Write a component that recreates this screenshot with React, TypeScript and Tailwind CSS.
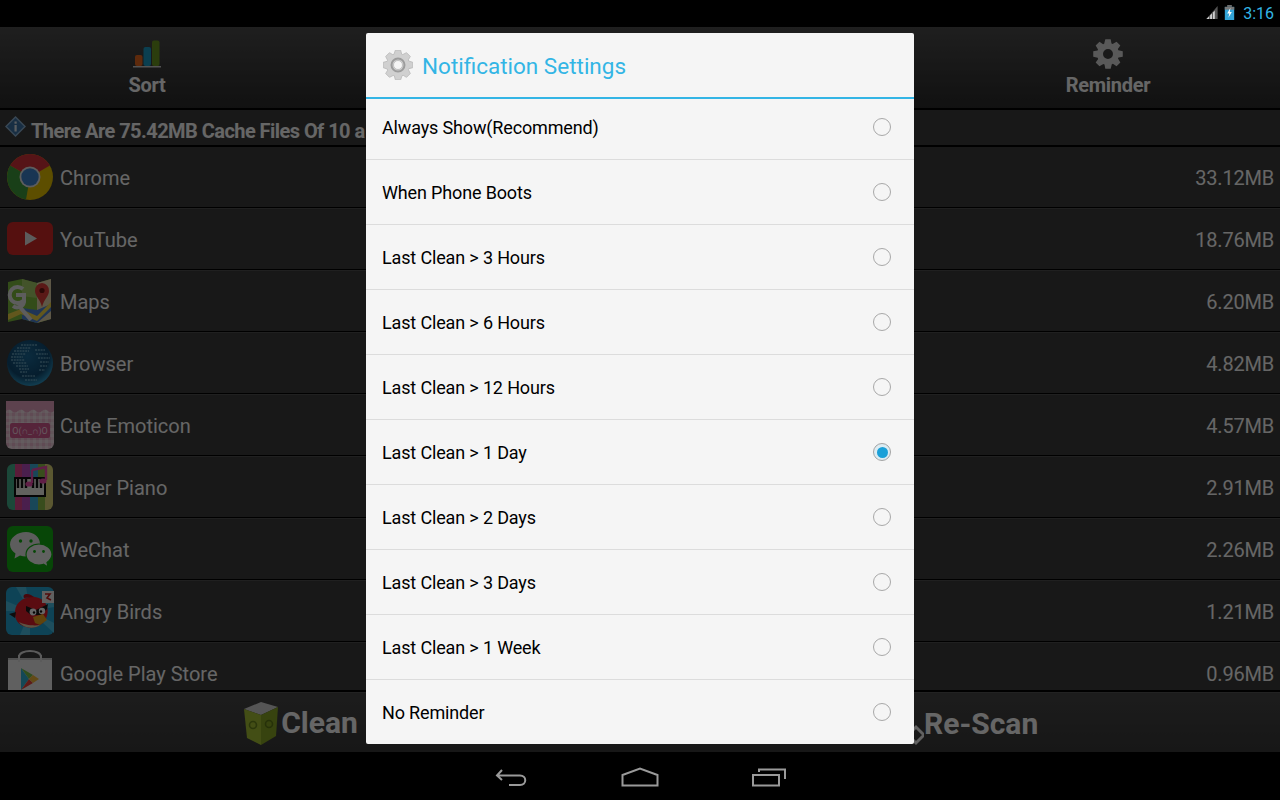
import React from 'react';

const gearPath = (cx: number, cy: number, outer: number, inner: number, teeth: number) => {
  const pts: string[] = [];
  const step = (Math.PI * 2) / teeth;
  for (let i = 0; i < teeth; i++) {
    const a = i * step - Math.PI / 2;
    const offs: [number, number][] = [
      [-0.5, inner],
      [-0.28, outer],
      [0.18, outer],
      [0.36, inner],
    ];
    offs.forEach(([o, r]) => {
      const t = a + o * step + step * 0.05;
      pts.push(`${(cx + Math.cos(t) * r).toFixed(2)} ${(cy + Math.sin(t) * r).toFixed(2)}`);
    });
  }
  return `M${pts.join('L')}Z`;
};

const ChromeIcon = () => (
  <svg width="46" height="46" viewBox="0 0 46 46">
    <circle cx="23" cy="23" r="23" fill="#e8c200" />
    <path d="M23 23L3.1 11.5A23 23 0 0 1 42.9 11.5Z" fill="#d8333a" />
    <path d="M23 23L3.1 11.5A23 23 0 0 0 19 45.6Z" fill="#3f9e3c" />
    <circle cx="23" cy="23" r="10.5" fill="#e8e8e8" />
    <circle cx="23" cy="23" r="8.7" fill="#3f86cf" />
  </svg>
);

const YouTubeIcon = () => (
  <svg width="46" height="34" viewBox="0 0 46 34">
    <rect width="46" height="33" rx="6" fill="#d42a26" />
    <path d="M18 9.5L30 16.5L18 23.5Z" fill="#e6e6e6" />
  </svg>
);

const MapsIcon = () => (
  <svg width="46" height="46" viewBox="0 0 46 46">
    <path d="M1 4L15 1L30 5L44 1V41L30 45L15 41L1 44Z" fill="#7fbf3f" />
    <path d="M30 5L44 1V41L30 45Z" fill="#e8d9b0" />
    <path d="M15 1L30 5V20L15 18Z" fill="#a8cf6a" />
    <path d="M15 30L30 32L44 26V33L30 45L15 41Z" fill="#4f86d8" />
    <path d="M1 36L14 31L30 38L44 24V29L30 43L14 36L1 42Z" fill="#f4d94a" />
    <path d="M16 11A8 8 0 1 0 16 23M9 17H17V24A7 7 0 0 1 6 28" fill="none" stroke="#e8e8e8" strokeWidth="4" />
    <path d="M12 28L24 42" stroke="#e8e8e8" strokeWidth="4" />
    <path d="M35 5A7.5 7.5 0 0 1 42 13C42 18 37 21 35 29C33 21 28 18 28 13A7.5 7.5 0 0 1 35 5Z" fill="#e0403a" />
    <circle cx="35" cy="12.5" r="2.6" fill="#6b1512" />
  </svg>
);

const BrowserIcon = () => (
  <svg width="46" height="46" viewBox="0 0 46 46">
    <defs>
      <radialGradient id="globe" cx="45%" cy="35%" r="70%">
        <stop offset="0%" stopColor="#1c6c9c" />
        <stop offset="65%" stopColor="#104a72" />
        <stop offset="100%" stopColor="#35aede" />
      </radialGradient>
    </defs>
    <circle cx="23" cy="23" r="23" fill="url(#globe)" />
    <g stroke="#9cd2e6" strokeWidth="0.9" strokeDasharray="2 0.8">
      <path d="M14 5H30M10 8H24M7 11H22M5 14H19M4 17H16M4 20H18M6 23H20M9 26H21M12 29H22M13 32H20M15 36H28M18 40H30" />
      <path d="M28 10H38M29 14H41M31 18H43M33 22H42M33 26H40M32 30H38" />
    </g>
  </svg>
);

const EmoticonIcon = () => (
  <svg width="48" height="48" viewBox="0 0 48 48">
    <defs>
      <pattern id="check" width="6" height="6" patternUnits="userSpaceOnUse">
        <rect width="6" height="6" fill="#f6d4e2" />
        <rect width="3" height="3" fill="#efbcd2" />
        <rect x="3" y="3" width="3" height="3" fill="#fbe6ee" />
      </pattern>
    </defs>
    <rect width="48" height="48" rx="6" fill="url(#check)" />
    <path d="M0 0H48V10Q45 13 42 10T36 10T30 10T24 10T18 10T12 10T6 10T0 10Z" fill="#e8a6c4" />
    <rect x="4" y="22" width="40" height="15" rx="2" fill="#d75a92" />
    <text x="24" y="33" textAnchor="middle" fontSize="9" fill="#fbdbe8" fontFamily="Roboto, sans-serif">O(∩_∩)O</text>
  </svg>
);

const PianoIcon = () => (
  <svg width="46" height="46" viewBox="0 0 46 46">
    <defs>
      <clipPath id="pianoClip">
        <rect width="46" height="46" rx="6" />
      </clipPath>
    </defs>
    <g clipPath="url(#pianoClip)">
      <rect x="0" width="8" height="46" fill="#45b58f" />
      <rect x="8" width="8" height="46" fill="#e0488f" />
      <rect x="15" width="8" height="46" fill="#b84fc0" />
      <rect x="23" width="8" height="46" fill="#3fb2dd" />
      <rect x="31" width="7" height="46" fill="#8fc04a" />
      <rect x="38" width="8" height="46" fill="#e3dd7a" />
    </g>
    <rect x="8" y="14" width="30" height="18" fill="#f2f2ea" stroke="#111" strokeWidth="2" />
    <path d="M11 14V24M15 14V24M19 14V24M26 14V24M30 14V24M34 14V24" stroke="#111" strokeWidth="2.4" />
    <path d="M25 6L39 3V16M25 6V19" fill="none" stroke="#f04bb0" strokeWidth="2.4" />
    <ellipse cx="22" cy="20" rx="3.6" ry="2.6" fill="#f04bb0" />
    <ellipse cx="36" cy="17" rx="3.6" ry="2.6" fill="#f04bb0" />
  </svg>
);

const WeChatIcon = () => (
  <svg width="46" height="46" viewBox="0 0 46 46">
    <rect width="46" height="46" rx="6" fill="#13b013" />
    <path d="M19 6C10.5 6 3 11.5 3 18.5C3 22.5 5.5 25.5 8.5 27.5L7.5 32.5L13 29.5C15 30 17 30.5 19 30.5C25 30.5 33 25 33 18C33 11 27 6 19 6Z" fill="#e8e8e8" />
    <circle cx="13.5" cy="15" r="1.7" fill="#13b013" />
    <circle cx="24" cy="15" r="1.7" fill="#13b013" />
    <path d="M32 18C25 18 19 22.5 19 28.5C19 34.5 25 39 32 39C33.5 39 35 38.8 36.5 38.2L41 41L40 36.5C42.5 34.5 45 32 45 28.5C45 22.5 39 18 32 18Z" fill="#f2f2f2" stroke="#13b013" strokeWidth="1.2" />
    <circle cx="27.5" cy="25.5" r="1.4" fill="#13b013" />
    <circle cx="36.5" cy="25.5" r="1.4" fill="#13b013" />
  </svg>
);

const BirdsIcon = () => (
  <svg width="48" height="48" viewBox="0 0 48 48">
    <rect width="48" height="48" rx="6" fill="#25a9d8" />
    <path d="M24 24L10 0H20ZM24 24L48 10V20ZM24 24L0 14V24ZM24 24L14 48H24ZM24 24L48 36V46Z" fill="#4cc4e8" />
    <path d="M9 24C10 14 20 9 29 10C38 11 44 19 41 29C38 39 28 42 20 40C12 38 8 32 9 24Z" fill="#e01e2c" />
    <path d="M18 11C16 7 21 6 25 8L28 10Z" fill="#b5121f" />
    <path d="M13 35C18 42 29 42 34 38C28 39 18 38 13 35Z" fill="#e8d3a8" />
    <path d="M3 27L10 25L9 31Z" fill="#222" />
    <path d="M20 19L30 23L42 17L41 22L35 28H25L20 24Z" fill="#1a1a1a" />
    <circle cx="27" cy="25" r="3.4" fill="#fff" />
    <circle cx="36" cy="24" r="3.2" fill="#fff" />
    <circle cx="28" cy="25.5" r="1.2" fill="#111" />
    <circle cx="35" cy="24.5" r="1.2" fill="#111" />
    <path d="M27 30L37 27L41 33L34 38L29 36Z" fill="#f0a81e" />
    <rect x="36" y="4" width="12" height="12" fill="#f0f0f0" />
    <path d="M39 7H44L41 11L45 13" fill="none" stroke="#c81e1e" strokeWidth="1.6" />
  </svg>
);

const PlayStoreIcon = () => (
  <svg width="46" height="46" viewBox="0 0 46 46">
    <path d="M12 12V7C12 -1 34 -1 34 7V12" fill="none" stroke="#e4e4e4" strokeWidth="2" />
    <path d="M1 8H45V46H1Z" fill="#f1f1f1" />
    <path d="M1 8H45V10H1Z" fill="#c8c8c8" />
    <path d="M12 5V12M34 5V12" stroke="#e4e4e4" strokeWidth="2" />
    <path d="M14 18L22 29L14 40Z" fill="#34b4d8" />
    <path d="M14 18L26 25L22 29Z" fill="#7cc24a" />
    <path d="M14 40L26 33L22 29Z" fill="#e8453c" />
    <path d="M26 25L32 29L26 33L22 29Z" fill="#f6b93a" />
  </svg>
);

const apps: { name: string; size: string; icon: React.ReactNode }[] = [
  { name: 'Chrome', size: '33.12MB', icon: <ChromeIcon /> },
  { name: 'YouTube', size: '18.76MB', icon: <YouTubeIcon /> },
  { name: 'Maps', size: '6.20MB', icon: <MapsIcon /> },
  { name: 'Browser', size: '4.82MB', icon: <BrowserIcon /> },
  { name: 'Cute Emoticon', size: '4.57MB', icon: <EmoticonIcon /> },
  { name: 'Super Piano', size: '2.91MB', icon: <PianoIcon /> },
  { name: 'WeChat', size: '2.26MB', icon: <WeChatIcon /> },
  { name: 'Angry Birds', size: '1.21MB', icon: <BirdsIcon /> },
  { name: 'Google Play Store', size: '0.96MB', icon: <PlayStoreIcon /> },
];

const options = [
  'Always Show(Recommend)',
  'When Phone Boots',
  'Last Clean > 3 Hours',
  'Last Clean > 6 Hours',
  'Last Clean > 12 Hours',
  'Last Clean > 1 Day',
  'Last Clean > 2 Days',
  'Last Clean > 3 Days',
  'Last Clean > 1 Week',
  'No Reminder',
];

const Radio = ({ checked }: { checked: boolean }) =>
  checked ? (
    <div className="w-[18px] h-[18px] rounded-full border-[1.5px] border-[#a4a4a4] bg-[#dcecf3] flex items-center justify-center">
      <div className="w-[11px] h-[11px] rounded-full bg-[#1aa0d8]"></div>
    </div>
  ) : (
    <div className="w-[18px] h-[18px] rounded-full border-[1.5px] border-[#a8a8a8]"></div>
  );

const StatusBar = () => (
  <div className="h-[27px] bg-black flex items-start justify-end pt-[5px] pr-[6px]">
    <svg width="14" height="15" viewBox="0 0 14 16">
      <path d="M13 1V15H1Z" fill="#555" />
      <path d="M1 15L4 12V15ZM5 11L7 9V15H5ZM8 8L10 6V15H8Z" fill="#cfcfcf" />
    </svg>
    <svg width="11" height="15" viewBox="0 0 11 16" className="ml-[5px]">
      <rect x="3" y="0" width="5" height="2" fill="#6c6c6c" />
      <rect x="0.5" y="2" width="10" height="14" fill="#33a5d8" />
      <rect x="0.5" y="2" width="10" height="3" fill="#777" />
      <path d="M6.5 3L3 9H5.3L4.3 13.5L8 7.5H5.8Z" fill="#fff" />
    </svg>
    <span className="ml-[8px] text-[16px] leading-[18px] text-[#33b5e5]">3:16</span>
  </div>
);

const NavBar = () => (
  <div className="h-[48px] bg-black flex items-start justify-center pt-[15px] relative">
    <svg width="36" height="20" viewBox="0 0 36 20">
      <path d="M8 3L3 8.5L8 13M3 8.5H26C33 8.5 33 18 26 18H15" fill="none" stroke="#9a9a9a" strokeWidth="2" />
    </svg>
    <svg width="38" height="20" viewBox="0 0 38 20" className="ml-[91px]">
      <path d="M1.5 18.5V8L19 1.5L36.5 8V18.5Z" fill="none" stroke="#9a9a9a" strokeWidth="2" />
    </svg>
    <svg width="36" height="20" viewBox="0 0 36 20" className="ml-[92px]">
      <path d="M8 5V2.5H34V12" fill="none" stroke="#9a9a9a" strokeWidth="2" />
      <rect x="2" y="8" width="26" height="10.5" fill="none" stroke="#9a9a9a" strokeWidth="2" />
    </svg>
  </div>
);

const Toolbar = () => (
  <div className="h-[83px] flex border-b-2 border-black bg-gradient-to-b from-[#4e4e4e] to-[#2c2c2c]">
    <div className="w-[294px] flex flex-col items-center pt-[13px]">
      <svg width="28" height="28" viewBox="0 0 28 28">
        <rect x="2" y="15" width="7.5" height="11" rx="2" fill="#ea6a20" />
        <rect x="10.5" y="7" width="7.5" height="19" rx="2" fill="#1d9fc7" />
        <rect x="19" y="0.5" width="7.5" height="25.5" rx="2" fill="#6d9a22" />
        <rect x="0" y="26" width="28" height="1.5" fill="#cfcfcf" />
      </svg>
      <span className="text-[20px] leading-[24px] font-bold tracking-[-0.3px] text-white mt-[5px]">Sort</span>
    </div>
    <div className="flex-1"></div>
    <div className="w-[344px] flex flex-col items-center pt-[12px]">
      <svg width="30" height="30" viewBox="0 0 30 30">
        <path fillRule="evenodd" d={`${gearPath(15, 15, 15, 11, 8)}M15 10A5 5 0 1 0 15 20A5 5 0 1 0 15 10Z`} fill="#dedede" />
      </svg>
      <span className="text-[20px] leading-[24px] font-bold tracking-[-0.3px] text-white mt-[4px]">Reminder</span>
    </div>
  </div>
);

const CleanIcon = () => (
  <svg width="34" height="44" viewBox="0 0 34 44">
    <path d="M0 8L17 1L34 6L17 14Z" fill="#d4d4d4" />
    <path d="M0 8L17 14V44L3 37Z" fill="#a8c236" />
    <path d="M34 6L17 14V44L32 35Z" fill="#8aa826" />
    <circle cx="9" cy="24" r="3.5" fill="none" stroke="#6d8a1c" strokeWidth="1.6" />
    <circle cx="25" cy="23" r="3.5" fill="none" stroke="#5f7a18" strokeWidth="1.6" />
  </svg>
);

export default function App() {
  return (
    <div className="w-[1280px] h-[800px] bg-black flex flex-col overflow-hidden font-['Roboto',sans-serif]">
      <StatusBar />
      <div className="relative h-[725px] flex flex-col">
        <Toolbar />
        <div className="h-[37px] flex items-center border-b-2 border-black bg-[#3e3e3e] pl-[5px] pt-[7px]">
          <svg width="21" height="21" viewBox="0 0 21 21" className="mb-[10px]">
            <path d="M10.5 1L20 10.5L10.5 20L1 10.5Z" fill="#3d74a8" stroke="#8fb4d4" strokeWidth="1.4" />
            <rect x="9.5" y="5.5" width="2.2" height="2.2" fill="#e0e8f0" />
            <rect x="9.5" y="9" width="2.2" height="6.5" fill="#e0e8f0" />
          </svg>
          <span className="ml-[5px] text-[20px] font-bold tracking-[-0.55px] text-white whitespace-nowrap">There Are 75.42MB Cache Files Of 10 a</span>
        </div>
        <div className="h-[543px] overflow-hidden bg-[#3c3c3c]">
          {apps.map((a) => (
            <div key={a.name} className="h-[62px] flex items-center border-b border-b-[#505050] shadow-[inset_0_-1px_0_#000] pl-[6px] pr-[6px] pb-[1px]">
              <div className="w-[48px] h-[48px] flex items-center justify-center shrink-0">{a.icon}</div>
              <span className="ml-[6px] mt-[2px] flex-1 text-[20px] text-white">{a.name}</span>
              <span className="mt-[2px] text-[20px] tracking-[-0.2px] text-white">{a.size}</span>
            </div>
          ))}
        </div>
        <div className="h-[2px] bg-black"></div>
        <div className="flex-1 flex bg-gradient-to-b from-[#484848] to-[#3a3a3a] border-t border-[#555]">
          <div className="w-[602px] flex items-center justify-center">
            <CleanIcon />
            <span className="ml-[3px] text-[30px] font-bold text-white">Clean</span>
          </div>
          <div className="flex-1 flex items-center pl-[272px]">
            <svg width="50" height="46" viewBox="0 0 50 46" className="mt-[3px]">
              <path d="M34 34L42 26L50 34L42 42Z" fill="none" stroke="#f2f2f2" strokeWidth="3" />
            </svg>
            <span className="mt-[2px] text-[30px] font-bold text-white">Re-Scan</span>
          </div>
        </div>

        <div className="absolute inset-0 bg-black/60 flex justify-center items-start pt-[6px]">
          <div className="w-[548px] h-[711px] bg-[#f5f5f5] rounded-[2px] flex flex-col">
            <div className="h-[66px] shrink-0 flex items-center border-b-2 border-[#33b5e5] pl-[17px]">
              <svg width="30" height="30" viewBox="0 0 30 30">
                <path fillRule="evenodd" d={`${gearPath(15, 15, 15, 11.5, 8)}M15 10.5A4.5 4.5 0 1 0 15 19.5A4.5 4.5 0 1 0 15 10.5Z`} fill="#d0d0d0" stroke="#b8b8b8" strokeWidth="0.8" />
                <circle cx="15" cy="15" r="6.5" fill="none" stroke="#9c9c9c" strokeWidth="2" />
              </svg>
              <span className="ml-[9px] mt-[4px] text-[22.5px] text-[#33b5e5]">Notification Settings</span>
            </div>
            {options.map((o, i) => (
              <div
                key={o}
                className={
                  i === 0
                    ? 'h-[61px] shrink-0 flex items-center justify-between pl-[16px] pr-[23px] pb-[4px] border-b border-[#dcdcdc]'
                    : i === options.length - 1
                      ? 'h-[64px] shrink-0 flex items-center justify-between pl-[16px] pr-[23px]'
                      : 'h-[65px] shrink-0 flex items-center justify-between pl-[16px] pr-[23px] border-b border-[#dcdcdc]'
                }
              >
                <span className="text-[18px] tracking-[-0.15px] text-black">{o}</span>
                <Radio checked={i === 5} />
              </div>
            ))}
          </div>
        </div>
      </div>
      <NavBar />
    </div>
  );
}
